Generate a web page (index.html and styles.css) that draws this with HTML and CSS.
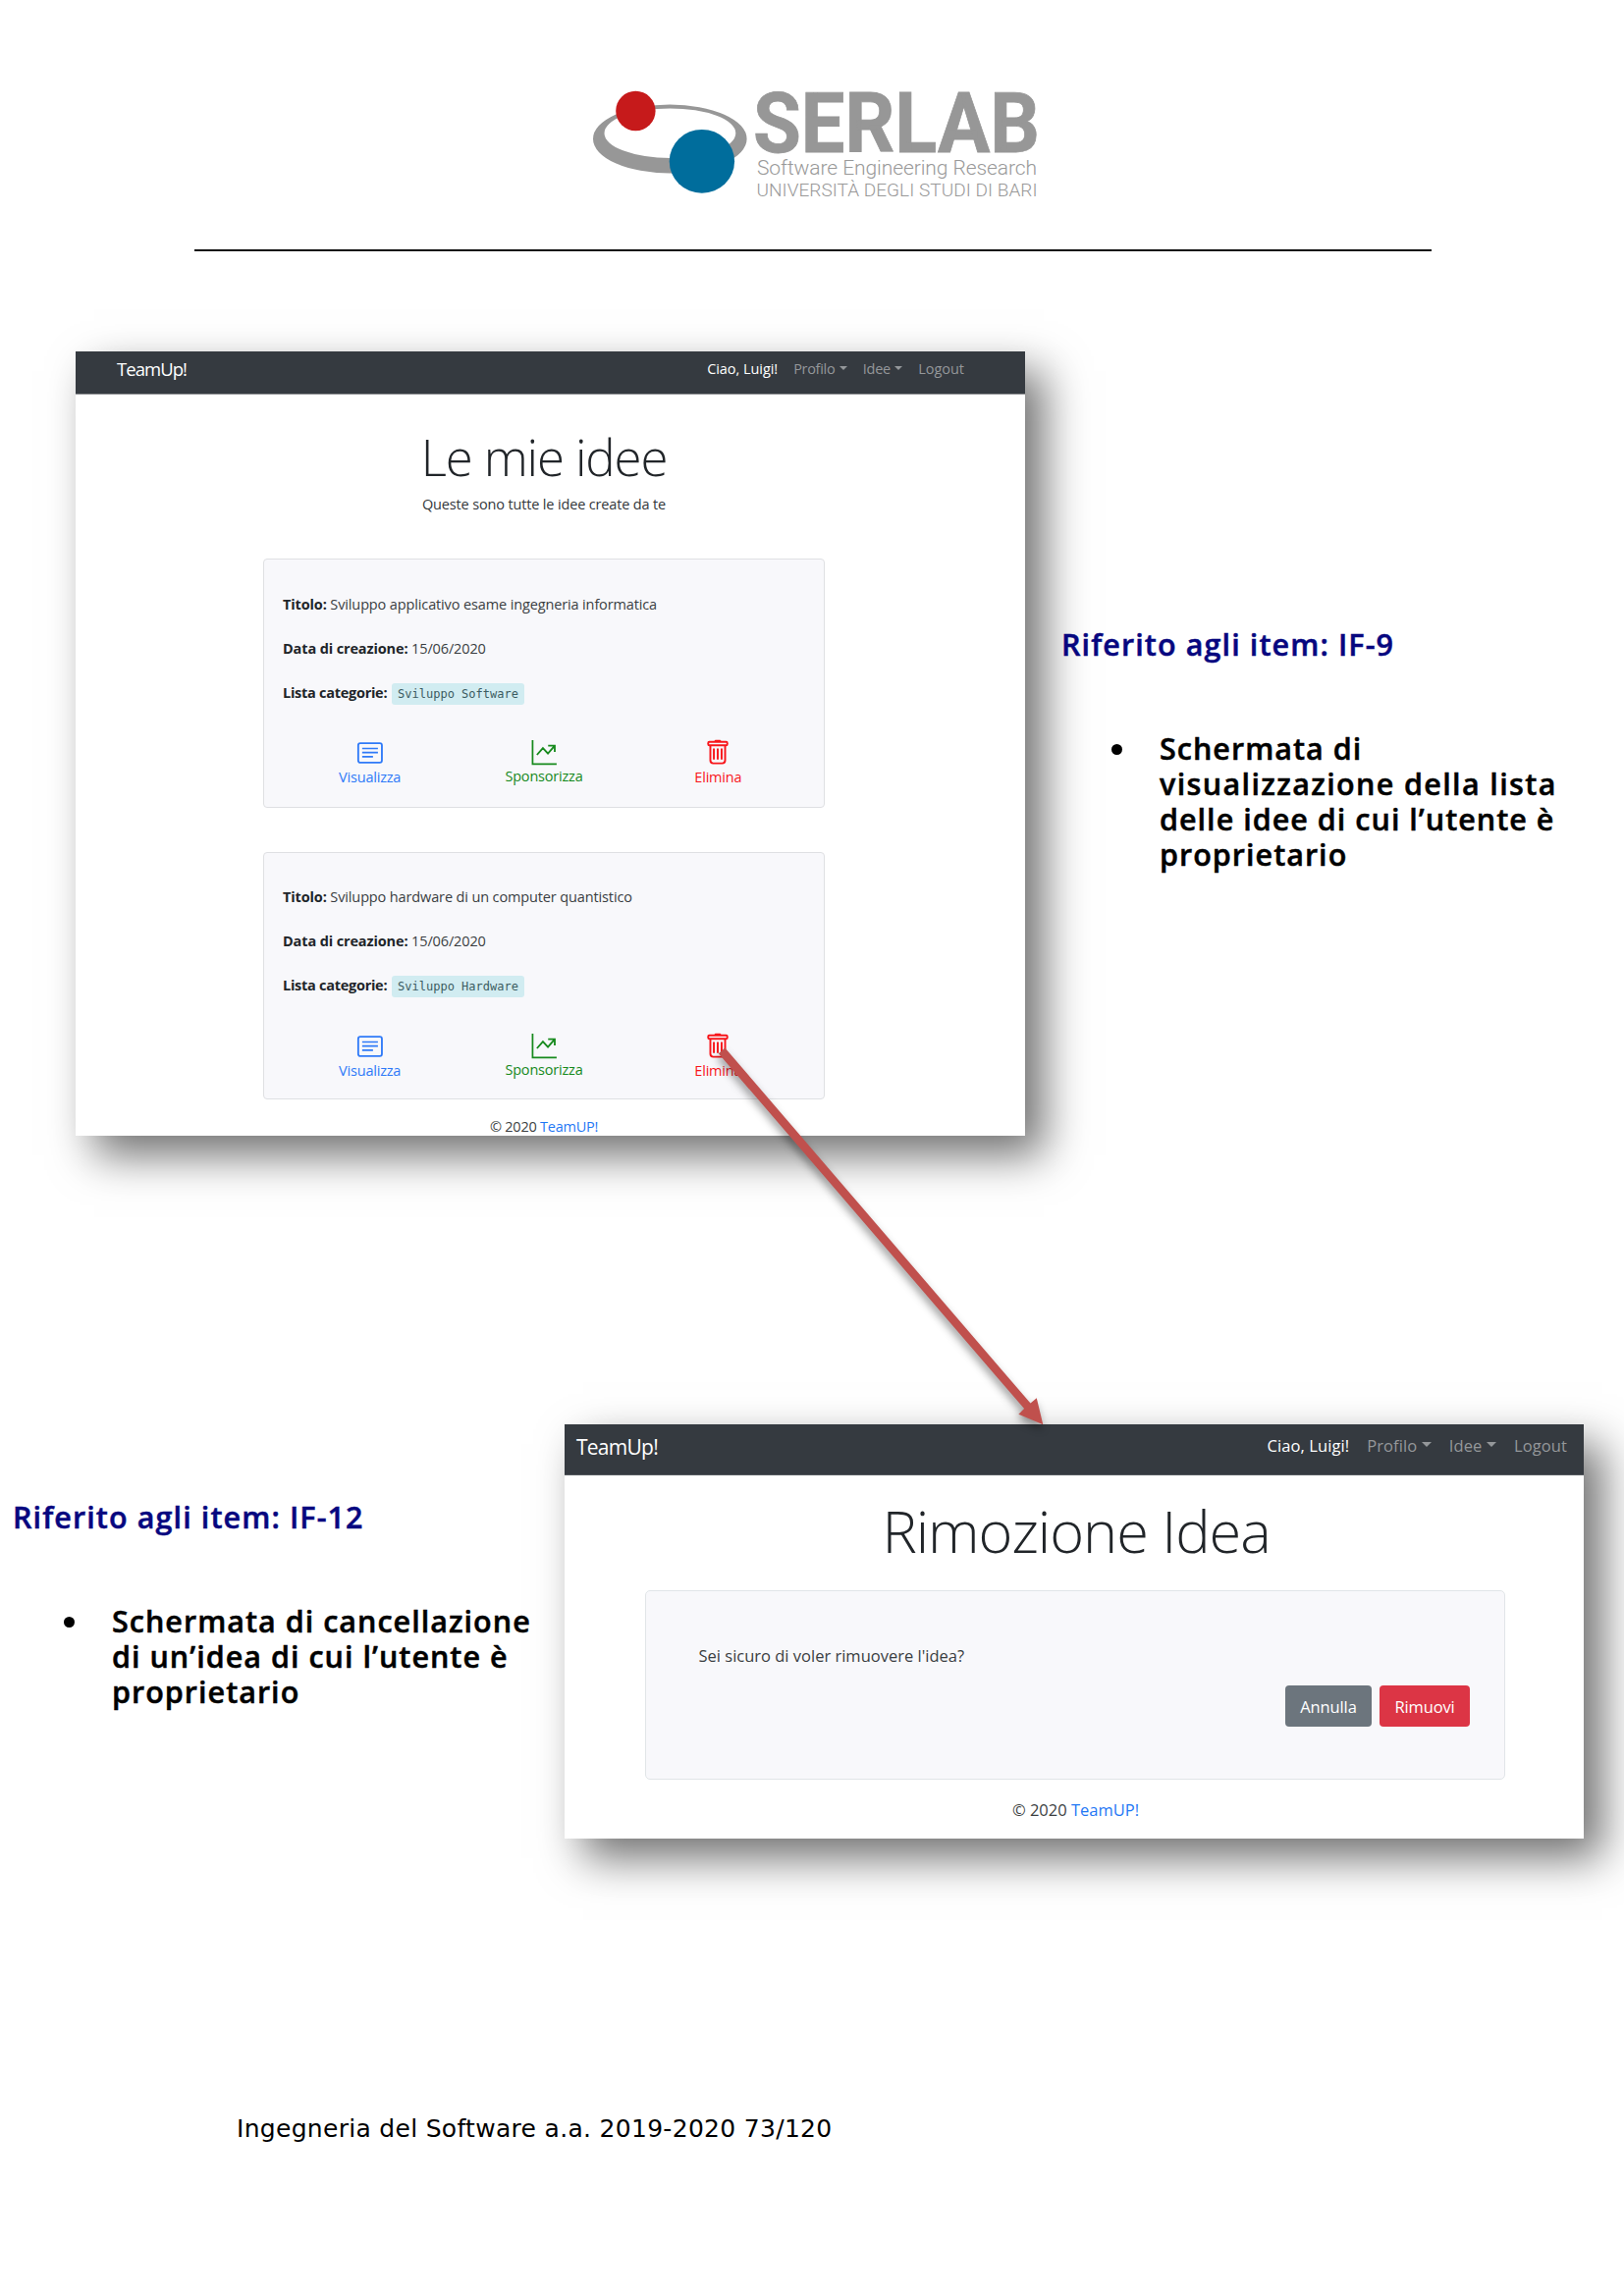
FILE: index.html
```html
<!DOCTYPE html>
<html lang="it">
<head>
<meta charset="utf-8">
<title>Ingegneria del Software a.a. 2019-2020</title>
<link rel="stylesheet" href="styles.css">
</head>
<body>
<svg class="sprite" width="0" height="0">
  <symbol id="ic-card" viewBox="0 0 28 28">
    <rect x="1.4" y="4.2" width="25" height="20.6" rx="2.2" fill="none" stroke="currentColor" stroke-width="1.9"/>
    <path d="M5.6 9.8H22.2M5.6 14.2H22.2M5.6 18.6H17" fill="none" stroke="currentColor" stroke-width="1.7"/>
  </symbol>
  <symbol id="ic-chart" viewBox="0 0 28 28">
    <path d="M2 1V26.2H27.4" fill="none" stroke="currentColor" stroke-width="1.8"/>
    <path d="M6.6 16.6L12.9 9.4L18.2 15.2L25.4 6.9M18.4 6.9H25.4V13.4" fill="none" stroke="currentColor" stroke-width="1.9"/>
  </symbol>
  <symbol id="ic-trash" viewBox="0 0 28 28">
    <path d="M10.4 2.6C10.4 1.2 11 .7 12.2 .7H15.8C17 .7 17.6 1.2 17.6 2.6Z" fill="currentColor"/>
    <rect x="3.9" y="2.9" width="20.2" height="3.6" rx="1.3" fill="none" stroke="currentColor" stroke-width="2"/>
    <path d="M6.2 6.8V22.4Q6.2 25.5 9.3 25.5H18.7Q21.8 25.5 21.8 22.4V6.8M9.9 9.8V21.6M14 9.8V21.6M18.1 9.8V21.6" fill="none" stroke="currentColor" stroke-width="2"/>
  </symbol>
</svg>

<div class="page">
  <header class="masthead">
    <svg class="logo" width="480" height="130" viewBox="590 80 480 130">
      <path fill="#979797" fill-rule="evenodd" d="M604 141.5a78.3 35 0 1 0 156.6 0a78.3 35 0 1 0-156.6 0ZM615.5 135.7a66.9 25.3 0 1 0 133.8 0a66.9 25.3 0 1 0-133.8 0Z"/>
      <circle cx="647.4" cy="113" r="20.2" fill="#c61a1b"/>
      <ellipse cx="714.9" cy="164.3" rx="33.2" ry="32.4" fill="#006d9c"/>
      <text class="logo-name" x="767" y="155.2" textLength="292" lengthAdjust="spacingAndGlyphs">SERLAB</text>
      <text class="logo-line" x="771" y="178.3" textLength="285" font-size="21">Software Engineering Research</text>
      <text class="logo-line" x="770.5" y="199.8" textLength="286" font-size="19">UNIVERSITÀ DEGLI STUDI DI BARI</text>
    </svg>
    <div class="rule"></div>
  </header>

  <section class="row row-list">
    <div class="window window-list">
      <nav class="nav">
        <span class="brand">TeamUp!</span>
        <span class="link link-active">Ciao, Luigi!</span>
        <span class="link link-profile">Profilo<i class="caret"></i></span>
        <span class="link link-ideas">Idee<i class="caret"></i></span>
        <span class="link">Logout</span>
      </nav>
      <div class="container">
        <h1>Le mie idee</h1>
        <p class="subtitle">Queste sono tutte le idee create da te</p>
        <article class="idea">
          <p><b>Titolo:</b> Sviluppo applicativo esame ingegneria informatica</p>
          <p><b>Data di creazione:</b> 15/06/2020</p>
          <p class="categories"><b>Lista categorie:</b><code>Sviluppo Software</code></p>
          <div class="actions">
            <a class="view"><svg><use href="#ic-card"/></svg>Visualizza</a>
            <a class="sponsor"><svg><use href="#ic-chart"/></svg>Sponsorizza</a>
            <a class="delete"><svg><use href="#ic-trash"/></svg>Elimina</a>
          </div>
        </article>
        <article class="idea">
          <p><b>Titolo:</b> Sviluppo hardware di un computer quantistico</p>
          <p><b>Data di creazione:</b> 15/06/2020</p>
          <p class="categories"><b>Lista categorie:</b><code>Sviluppo Hardware</code></p>
          <div class="actions">
            <a class="view"><svg><use href="#ic-card"/></svg>Visualizza</a>
            <a class="sponsor"><svg><use href="#ic-chart"/></svg>Sponsorizza</a>
            <a class="delete"><svg><use href="#ic-trash"/></svg>Elimina</a>
          </div>
        </article>
        <footer class="copyright">© 2020 <a>TeamUP!</a></footer>
      </div>
    </div>
    <aside class="note note-right">
      <h2>Riferito agli item: IF-9</h2>
      <ul><li>Schermata di<br><span class="wide">visualizzazione della lista</span><br>delle idee di cui l’utente è<br>proprietario</li></ul>
    </aside>
  </section>

  <section class="row row-remove">
    <aside class="note note-left">
      <h2>Riferito agli item: IF-12</h2>
      <ul><li>Schermata di cancellazione<br>di un’idea di cui l’utente è<br>proprietario</li></ul>
    </aside>
    <div class="window window-remove">
      <nav class="nav">
        <span class="brand">TeamUp!</span>
        <span class="link link-active">Ciao, Luigi!</span>
        <span class="link link-profile">Profilo<i class="caret"></i></span>
        <span class="link link-ideas">Idee<i class="caret"></i></span>
        <span class="link">Logout</span>
      </nav>
      <h1>Rimozione Idea</h1>
      <div class="confirm">
        <p>Sei sicuro di voler rimuovere l'idea?</p>
        <div class="buttons">
          <button class="btn btn-cancel">Annulla</button>
          <button class="btn btn-remove">Rimuovi</button>
        </div>
      </div>
      <footer class="copyright">© 2020 <a>TeamUP!</a></footer>
    </div>
  </section>

  <p class="page-footer">Ingegneria del Software a.a. 2019-2020 73/120</p>

  <svg class="arrow" width="360" height="420" viewBox="720 1050 360 420">
    <path fill="#c0504d" d="M738.4 1067.5L1049.5 1429.6L1055.8 1424.2L1062.3 1451.2L1037.4 1440.8L1043.1 1435.1L731.8 1073.2Z"/>
  </svg>
</div>
</body>
</html>
```
FILE: styles.css
```css
* { box-sizing: border-box; }
body { margin: 0; background: #fff; }
h1, h2, p, ul { margin: 0; padding: 0; font-weight: 400; }
.sprite { display: block; height: 0; }

.page {
  position: relative;
  width: 1654px;
  height: 2339px;
  overflow: hidden;
  display: flex;
  flex-direction: column;
  font-family: "Open Sans", "Noto Sans", sans-serif;
  color: #212529;
}

/* Document header */
.masthead { height: 358px; padding-top: 80px; flex: none; }
.logo { display: block; margin-left: 590px; overflow: visible; }
.logo-name { font: 700 86px Roboto, sans-serif; fill: #979797; stroke: #979797; stroke-width: .8px; }
.logo-line { font-family: Roboto, sans-serif; font-weight: 300; fill: #999; }
.rule { width: 1260px; height: 2px; margin: 44px 0 0 198px; background: #111; }

/* Rows pairing a screen with its note */
.row { display: flex; align-items: flex-start; flex: none; }
.row-list { height: 1093px; padding-left: 77px; }
.row-remove { height: 680px; }

.window {
  flex: none;
  background: #fff;
  box-shadow: 19px 20px 42px rgba(0, 0, 0, .56);
}
.nav {
  display: flex;
  align-items: flex-start;
  background: #353a40;
  border-bottom: 1px solid #8f9194;
}
.brand { margin-right: auto; color: #fff; }
.link { display: flex; align-items: center; color: #94979a; }
.link-active { color: #fff; }
.caret { border: solid transparent; border-top-color: #94979a; border-bottom: 0; }
.window h1 { font-weight: 300; text-align: center; white-space: nowrap; }
.copyright { text-align: center; color: #3c3f42; }
.copyright a { color: #1f78f5; }

/* Idea list screen */
.window-list { width: 967px; height: 799px; font-size: 14.5px; letter-spacing: -.15px; }
.window-list .nav { height: 44px; padding: 0 62px 0 42px; gap: 16px; }
.window-list .brand { font-size: 18.5px; line-height: 36px; letter-spacing: -.95px; }
.window-list .link { line-height: 36px; letter-spacing: -.05px; }
.window-list .link-profile, .window-list .link-ideas { letter-spacing: -.3px; }
.window-list .caret { border-width: 4.5px 4px 0; margin: -3px 0 0 4.5px; }
.container { width: 954px; display: flex; flex-direction: column; align-items: center; }
.window-list h1 { margin-top: 32px; font-size: 51px; line-height: 63px; letter-spacing: -1.15px; }
.subtitle { margin-top: 5px; line-height: 24px; color: #33373b; }

.idea {
  width: 572px;
  height: 254px;
  margin-top: 43px;
  padding: 34px 19px 0;
  border: 1px solid #dfe0e3;
  border-radius: 4px;
  background: #f8f8fb;
  color: #3a3e42;
}
.idea + .idea { height: 252px; margin-top: 45px; padding-top: 33px; }
.idea p { height: 24px; margin-bottom: 21px; line-height: 24px; white-space: nowrap; letter-spacing: -.13px; }
.idea b { color: #212529; letter-spacing: -.13px; }
.idea .categories { display: flex; align-items: center; margin-bottom: 35px; }
.idea + .idea .categories { margin-bottom: 36px; }
.idea .categories b { letter-spacing: -.27px; }
.categories code {
  margin: 1px 0 0 4.5px;
  padding: 0 6.3px;
  border-radius: 3px;
  background: #d1ecf1;
  color: #3c5c62;
  font: 12px/22px "DejaVu Sans Mono", "Liberation Mono", monospace;
  letter-spacing: 0;
}
.actions { display: grid; grid-template-columns: repeat(3, 1fr); letter-spacing: -.2px; }
.actions a { display: flex; flex-direction: column; align-items: center; line-height: 24px; }
.actions svg { width: 28px; height: 27px; }
.view { color: #2f7af8; }
.sponsor { color: #178a1d; }
.delete { color: #f8161b; }
.actions .sponsor { line-height: 22px; }
.window-list .copyright { margin-top: 16px; line-height: 24px; letter-spacing: -.25px; }

/* Idea removal screen */
.window-remove { width: 1038px; height: 422px; font-size: 16.5px; }
.window-remove .nav { height: 52px; padding: 0 17px 0 12px; gap: 18px; border-bottom-color: #55595e; }
.window-remove .brand { font-size: 21px; line-height: 46px; letter-spacing: -.75px; }
.window-remove .link { line-height: 44px; letter-spacing: .1px; }
.window-remove .caret { border-width: 5.5px 5px 0; margin: -4px 0 0 4.5px; }
.window-remove h1 { margin: 20px 0 25px; padding-left: 4px; font-size: 59.5px; line-height: 72px; letter-spacing: -1.05px; }
.confirm {
  width: 876px;
  height: 193px;
  margin-left: 82px;
  padding: 53px 35px 0 53.5px;
  border: 1px solid #e1e5e8;
  border-radius: 5px;
  background: #f8f8fb;
}
.confirm p { line-height: 26px; color: #3a3e42; }
.buttons { display: flex; justify-content: flex-end; gap: 8px; margin-top: 17px; }
.btn {
  height: 42px;
  padding: 1px 0 0;
  border: 0;
  border-radius: 4px;
  color: #fff;
  font: 16.5px/28px "Open Sans", "Noto Sans", sans-serif;
  letter-spacing: -.12px;
}
.btn-cancel { width: 88px; background: #6c757d; }
.btn-remove { width: 92px; background: #dc3545; }
.window-remove .copyright { margin-top: 18px; padding-left: 3px; line-height: 26px; }

/* Notes */
.note { flex: none; font-size: 30.5px; line-height: 36px; letter-spacing: 1.02px; white-space: nowrap; color: #000; }
.note h2 { font-size: 30.5px; font-weight: 600; letter-spacing: 1.1px; color: #07077f; -webkit-text-stroke: .5px #07077f; }
.note ul { list-style: none; margin-top: 70px; }
.note li { position: relative; font-weight: 600; line-height: 36.1px; -webkit-text-stroke: .5px #000; }
.note li::before {
  content: "";
  position: absolute;
  left: -49px;
  top: 14px;
  width: 11px;
  height: 11px;
  border-radius: 50%;
  background: #000;
}
.wide { letter-spacing: 1.36px; }
.note-right { padding: 280px 0 0 37px; }
.note-right ul { margin-left: 100px; }
.note-left { width: 575px; padding: 76px 0 0 13px; }
.note-left ul { margin-left: 101px; }

.page-footer {
  margin: 9px 0 0 241px;
  font: 25px/58px "DejaVu Sans", Verdana, sans-serif;
  letter-spacing: .3px;
  color: #000;
}

/* Connector from the delete action to the removal screen */
.arrow {
  position: absolute;
  left: 720px;
  top: 1050px;
  overflow: visible;
  filter: drop-shadow(-1px 5px 4px rgba(0, 0, 0, .4));
}
```
